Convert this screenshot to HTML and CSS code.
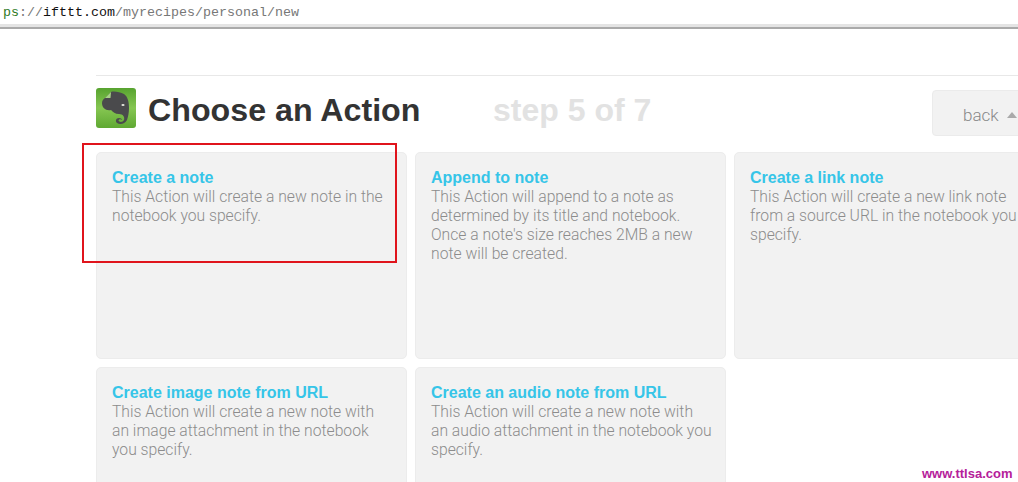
FILE: index.html
```html
<!DOCTYPE html>
<html lang="en">
<head>
  <meta charset="UTF-8" />
  <title>Choose an Action</title>
  <link rel="stylesheet" href="styles.css">
</head>
<body>

  <div class="addressbar">
    <span class="scheme">ps</span><span class="sep">://</span><span class="host">ifttt.com</span><span class="path">/myrecipes/personal/new</span>
  </div>

  <main class="page">
    <header class="head">
      <svg class="logo" width="40" height="40" viewBox="0 0 40 40">
        <defs>
          <linearGradient id="logoBg" x1="0" y1="0" x2="0" y2="1">
            <stop offset="0" stop-color="#57a32f"/>
            <stop offset="0.5" stop-color="#86c652"/>
            <stop offset="1" stop-color="#5fa832"/>
          </linearGradient>
        </defs>
        <rect width="40" height="40" rx="3" fill="url(#logoBg)"/>
        <path d="M9 10 L15 4 C18 3 24 4 28 6 C32 9 33 14 33 20 C33 25 32 29 31 32 C29 36 24 37 21 35 C19 33 20 30 23 30 C25 30 26 31 26 32 C25 31 23 31 22.500 32.500 C23 34.500 27 34.500 28 32 C29 29 27 26 23 26 C19 26 17 24 15 22 C10 23 6 20 6 15 C6 13 7 11 9 10 Z" fill="#4a4a4c"/>
        <path d="M15 4 L14.500 10 L9 10 Z" fill="#a6d384"/>
        <ellipse cx="27" cy="17" rx="1.600" ry="1" fill="#e8e8e0"/>
      </svg>
      <h1>Choose an Action</h1>
      <div class="step">step 5 of 7</div>
      <a class="back">back <span class="caret"></span></a>
    </header>

    <div class="grid">
      <div class="card">
        <h2>Create a note</h2>
        <p>This Action will create a new note in the notebook you specify.</p>
      </div>
      <div class="card">
        <h2>Append to note</h2>
        <p>This Action will append to a note as determined by its title and notebook.<br>Once a note's size reaches 2MB a new note will be created.</p>
      </div>
      <div class="card">
        <h2>Create a link note</h2>
        <p>This Action will create a new link note from a source URL in the notebook you specify.</p>
      </div>
      <div class="card">
        <h2>Create image note from URL</h2>
        <p>This Action will create a new note with<br>an image attachment in the notebook<br>you specify.</p>
      </div>
      <div class="card">
        <h2>Create an audio note from URL</h2>
        <p>This Action will create a new note with<br>an audio attachment in the notebook you specify.</p>
      </div>
    </div>
  </main>

  <div class="highlight"></div>
  <div class="watermark">www.ttlsa.com</div>

</body>
</html>
```

FILE: styles.css
```css
* { margin: 0; padding: 0; box-sizing: border-box; }

html, body {
  width: 1018px;
  height: 482px;
  overflow: hidden;
}

body {
  background: #fff;
  font-family: 'Liberation Sans', Arial, sans-serif;
  position: relative;
}

.addressbar {
  height: 29px;
  padding: 5px 0 0 3px;
  font-family: 'Liberation Mono', monospace;
  font-size: 13.33px;
  line-height: 16px;
  white-space: nowrap;
  background: #fff;
  border-bottom: 2px solid #aaa;
  box-shadow: inset 0 -3px 0 #e4e4e4;
}

.scheme { color: #2c7a1e; }
.sep { color: #777; }
.host { color: #111; }
.path { color: #777; }

.page {
  width: 1100px;
  margin-left: 96px;
  padding-top: 46px;
}

.head {
  display: flex;
  align-items: flex-start;
  width: 949px;
  height: 77px;
  border-top: 1px solid #e8e8e8;
  padding-top: 12px;
}

.logo {
  flex: none;
  margin-right: 12px;
}

h1 {
  font-size: 32.2px;
  line-height: 44px;
  font-weight: 700;
  color: #333;
  width: 345px;
}

.step {
  font-size: 32px;
  line-height: 44px;
  font-weight: 700;
  color: #e2e2e2;
  width: 439px;
}

.back {
  display: block;
  flex: none;
  width: 110px;
  height: 46px;
  margin-top: 2px;
  padding: 14px 0 0 30px;
  background: #f2f2f2;
  border: 1px solid #ebebeb;
  border-radius: 4px;
  font-family: Roboto, sans-serif;
  font-weight: 300;
  font-size: 17px;
  line-height: 20px;
  color: #888;
}

.caret {
  display: inline-block;
  margin-left: 4px;
  vertical-align: 3px;
  border-left: 5px solid transparent;
  border-right: 5px solid transparent;
  border-bottom: 6px solid #aaa;
}

.grid {
  display: grid;
  grid-template-columns: repeat(3, 311px);
  grid-auto-rows: 207px;
  gap: 8px;
}

.card {
  background: #f2f2f2;
  border: 1px solid #ececec;
  border-radius: 5px;
  padding: 15px 8px 0 15px;
}

h2 {
  font-size: 16px;
  line-height: 19px;
  font-weight: 700;
  color: #36c5e8;
}

p {
  font-family: Roboto, sans-serif;
  font-weight: 300;
  font-size: 15.7px;
  line-height: 19px;
  color: #8c8c8c;
}

.highlight {
  position: absolute;
  left: 82px;
  top: 143px;
  width: 315px;
  height: 120px;
  border: 2px solid #e0141c;
}

.watermark {
  position: absolute;
  left: 922px;
  top: 466px;
  font-family: 'Liberation Sans', sans-serif;
  font-size: 13px;
  line-height: 15px;
  font-weight: 700;
  color: #b5209a;
}
```
